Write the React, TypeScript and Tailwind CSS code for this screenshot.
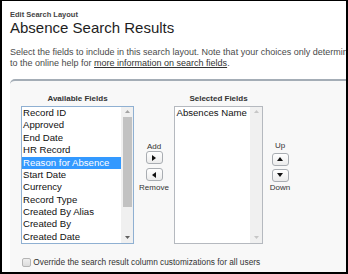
import React from "react";

const items = [
  "Record ID",
  "Approved",
  "End Date",
  "HR Record",
  "Reason for Absence",
  "Start Date",
  "Currency",
  "Record Type",
  "Created By Alias",
  "Created By",
  "Created Date",
];

function Tri({ dir, color = "#111" }: { dir: "up" | "down" | "left" | "right"; color?: string }) {
  const pts: Record<string, string> = {
    up: "0,4 6,4 3,0",
    down: "0,0 6,0 3,4",
    left: "4,0 4,6 0,3",
    right: "0,0 0,6 4,3",
  };
  const w = dir === "up" || dir === "down" ? 6 : 4;
  const h = dir === "up" || dir === "down" ? 4 : 6;
  return (
    <svg width={w} height={h} viewBox={`0 0 ${w} ${h}`}>
      <polygon points={pts[dir]} fill={color} />
    </svg>
  );
}

function Btn({ dir, h = "h-[13px]" }: { dir: "up" | "down" | "left" | "right"; h?: string }) {
  return (
    <div
      className={`w-[17px] ${h} rounded-[3px] border border-[#a9adb2] bg-gradient-to-b from-white to-[#ececec] flex items-center justify-center`}
    >
      <Tri dir={dir} />
    </div>
  );
}

function ScrollArrow({ dir, color }: { dir: "up" | "down"; color: string }) {
  return (
    <svg width="5" height="3" viewBox="0 0 5 3">
      <polygon points={dir === "up" ? "0,3 5,3 2.5,0" : "0,0 5,0 2.5,3"} fill={color} />
    </svg>
  );
}

export default function App() {
  return (
    <div className="w-[348px] h-[274px] bg-black pt-px pl-[2px] pr-[2px] pb-[2px] box-border">
      <div className="w-full h-full bg-white flex flex-col font-['Liberation_Sans',Arial,sans-serif] overflow-hidden">
        <div className="pl-[8px]">
          <div className="mt-[10.4px] text-[7.5px] leading-[8px] font-bold text-[#444]">Edit Search Layout</div>
          <div className="-mt-[0.6px] text-[15px] leading-[18px] text-[#1e1e1e]">Absence Search Results</div>
          <div className="mt-[10px] text-[9px] leading-[11px] text-[#4a4a4a] whitespace-nowrap">
            <div>
              Select the fields to include in this search layout. Note that your choices only determine which fields
              are displayed. Refer
            </div>
            <div>
              to the online help for <span className="underline text-[#333]">more information on search fields</span>.
            </div>
          </div>
        </div>

        <div className="mt-[10.2px] ml-[8px] flex-1 border-t-2 border-[#a4adb6] rounded-tl-[5px] bg-[#f8f8f8] pt-[12.8px] pl-[11px] flex flex-col">
          <div className="flex">
            {/* Available */}
            <div className="w-[113px] flex flex-col items-center">
              <div className="text-[8px] leading-[10px] font-bold text-[#333]">Available Fields</div>
              <div className="mt-[2.2px] w-[113px] h-[138px] border border-[#8fb0d2] bg-white flex box-border">
                <div className="flex-1 flex flex-col">
                  {items.map((it) => (
                    <div
                      key={it}
                      className={`h-[12.4px] leading-[12.4px] text-[9.6px] pl-[1px] whitespace-nowrap ${
                        it === "Reason for Absence" ? "bg-[#3399ff] text-white" : "text-[#111]"
                      }`}
                    >
                      {it}
                    </div>
                  ))}
                </div>
                <div className="w-[12px] bg-[#f0f0f0] flex flex-col items-center">
                  <div className="h-[10px] flex items-center justify-center">
                    <ScrollArrow dir="up" color="#a3a3a3" />
                  </div>
                  <div className="w-[9px] h-[90px] bg-[#c2c2c2]" />
                  <div className="flex-1" />
                  <div className="h-[10px] flex items-center justify-center">
                    <ScrollArrow dir="down" color="#606060" />
                  </div>
                </div>
              </div>
            </div>

            {/* Add / Remove */}
            <div className="w-[40px] flex flex-col items-center pt-[48.5px] text-[8px] text-[#333]">
              <div className="leading-[9px]">Add</div>
              <Btn dir="right" />
              <div className="mt-[4px]">
                <Btn dir="left" />
              </div>
              <div className="mt-[2px] leading-[9px]">Remove</div>
            </div>

            {/* Selected */}
            <div className="w-[89px] flex flex-col items-center">
              <div className="text-[8px] leading-[10px] font-bold text-[#333]">Selected Fields</div>
              <div className="mt-[2.2px] w-[89px] h-[138px] border border-[#b5b9bf] bg-white flex box-border">
                <div className="flex-1 flex flex-col">
                  <div className="h-[12.4px] leading-[12.4px] text-[9.6px] pl-[1.5px] whitespace-nowrap text-[#111]">
                    Absences Name
                  </div>
                </div>
                <div className="w-[12px] bg-[#f0f0f0] flex flex-col items-center">
                  <div className="h-[10px] flex items-center justify-center">
                    <ScrollArrow dir="up" color="#c6c6c6" />
                  </div>
                  <div className="flex-1" />
                  <div className="h-[10px] flex items-center justify-center">
                    <ScrollArrow dir="down" color="#c6c6c6" />
                  </div>
                </div>
              </div>
            </div>

            {/* Up / Down */}
            <div className="w-[34px] flex flex-col items-center pt-[47.5px] text-[8px] text-[#333]">
              <div className="leading-[9px]">Up</div>
              <div className="mt-[2.4px]">
                <Btn dir="up" />
              </div>
              <div className="mt-[3.3px]">
                <Btn dir="down" />
              </div>
              <div className="mt-[1.3px] leading-[9px]">Down</div>
            </div>
          </div>

          <div className="mt-[13.7px] ml-[0.7px] flex items-center">
            <div className="w-[9px] h-[9px] rounded-[2px] border border-[#b4b4b4] bg-gradient-to-b from-[#efefef] to-[#dcdcdc] box-border" />
            <div className="ml-[2.6px] text-[8.3px] leading-[9px] text-[#333] whitespace-nowrap">
              Override the search result column customizations for all users
            </div>
          </div>
        </div>
      </div>
    </div>
  );
}
